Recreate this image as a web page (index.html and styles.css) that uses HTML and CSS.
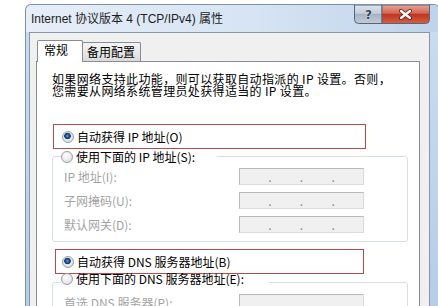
FILE: index.html
```html
<!DOCTYPE html>
<html lang="zh-CN">
<head>
<meta charset="UTF-8">
<title>Internet 协议版本 4 (TCP/IPv4) 属性</title>
<link rel="stylesheet" href="styles.css">
</head>
<body>
<div class="window">
    <div class="titlebar">
        <span class="title">Internet 协议版本 4 (TCP/IPv4) 属性</span>
        <svg class="caption-btns" width="76" height="19" viewBox="0 0 76 19">
            <defs>
                <linearGradient id="gHelp" x1="0" y1="0" x2="0" y2="1">
                    <stop offset="0" stop-color="#dde5ee"/>
                    <stop offset="0.45" stop-color="#c3cdd8"/>
                    <stop offset="0.5" stop-color="#a6b3c2"/>
                    <stop offset="1" stop-color="#c2ccd8"/>
                </linearGradient>
                <linearGradient id="gClose" x1="0" y1="0" x2="0" y2="1">
                    <stop offset="0" stop-color="#e8a494"/>
                    <stop offset="0.45" stop-color="#d46652"/>
                    <stop offset="0.5" stop-color="#be3623"/>
                    <stop offset="1" stop-color="#d65f42"/>
                </linearGradient>
            </defs>
            <path d="M0.5 0 V14.5 Q0.5 18.5 4.5 18.5 H28 V0 Z" fill="url(#gHelp)" stroke="#56657a"/>
            <path d="M28 0 V18.5 H71.5 Q75.5 18.5 75.5 14.5 V0 Z" fill="url(#gClose)" stroke="#56657a"/>
            <text x="14.5" y="14" text-anchor="middle" font-family="DejaVu Sans" font-weight="bold" font-size="12" fill="#34465a" stroke="#eef2f6" stroke-width="0.6" paint-order="stroke">?</text>
            <path d="M47 6 L56 13 M56 6 L47 13" stroke="#5a1a10" stroke-width="4" stroke-linecap="round"/>
            <path d="M47 6 L56 13 M56 6 L47 13" stroke="#fff" stroke-width="2.4" stroke-linecap="round"/>
        </svg>
    </div>
    <div class="client">
        <div class="tabs">
            <span class="tab active">常规</span>
            <span class="tab">备用配置</span>
        </div>
        <div class="panel">
            <p class="intro">如果网络支持此功能，则可以获取自动指派的 IP 设置。否则，<br>您需要从网络系统管理员处获得适当的 IP 设置。</p>

            <div class="mark">
                <label class="opt"><span class="radio on"></span>自动获得 IP 地址(O)</label>
            </div>
            <fieldset class="group">
                <legend><label class="opt"><span class="radio"></span>使用下面的 IP 地址(S):</label></legend>
                <div class="row first"><span class="lbl">IP 地址(I):</span><span class="ipbox"><i>.</i><i>.</i><i>.</i></span></div>
                <div class="row"><span class="lbl">子网掩码(U):</span><span class="ipbox"><i>.</i><i>.</i><i>.</i></span></div>
                <div class="row"><span class="lbl">默认网关(D):</span><span class="ipbox"><i>.</i><i>.</i><i>.</i></span></div>
            </fieldset>

            <div class="mark mark-dns">
                <label class="opt"><span class="radio on"></span>自动获得 DNS 服务器地址(B)</label>
            </div>
            <fieldset class="group group-dns">
                <legend><label class="opt"><span class="radio"></span>使用下面的 DNS 服务器地址(E):</label></legend>
                <div class="row first"><span class="lbl">首选 DNS 服务器(P):</span><span class="ipbox"><i>.</i><i>.</i><i>.</i></span></div>
            </fieldset>
        </div>
    </div>
</div>
</body>
</html>
```

FILE: styles.css
```css
body {
    margin: 0;
    height: 306px;
    overflow: hidden;
    background: #fff;
    font-family: "Noto Sans CJK SC", sans-serif;
    font-size: 12px;
    color: #000;
}
.window {
    margin: 4px 0 0 25px;
    width: 401px;
    height: 301px;
    overflow: hidden;
    padding: 0 9px 0 3px;
    border: 1px solid #7d90a8;
    border-bottom: none;
    border-radius: 6px 6px 0 0;
    background: linear-gradient(180deg, #dfe9f5 0, #c9dbee 30px, #b7cde6 100%);
}
.titlebar {
    height: 27px;
    display: flex;
    justify-content: space-between;
    align-items: flex-start;
    background: linear-gradient(90deg, #e6eef8 0, #d6e4f3 55%, #bed3ea 100%);
    margin: 0 -9px 0 -3px;
    padding: 0 9px 0 3px;
    border-radius: 6px 6px 0 0;
}
.title {
    margin: 6px 0 0 2px;
    line-height: 16px;
    font-family: "Liberation Sans", "Noto Sans CJK SC", sans-serif;
    font-size: 12px;
    color: #1e1e1e;
}
.caption-btns {
    display: block;
    flex-shrink: 0;
}
.client {
    height: 280px;
    background: #f0f0f0;
    border: 1px solid #8797aa;
    border-bottom: none;
}
.tabs {
    display: flex;
    align-items: flex-end;
    padding: 7px 0 0 7px;
}
.tab {
    height: 17px;
    line-height: 16px;
    padding: 1px 5px 0 4px;
    border: 1px solid #898c95;
    border-bottom: none;
    background: linear-gradient(180deg, #f4f4f4 0, #e9e9e9 50%, #dadada 100%);
    border-radius: 2px 2px 0 0;
}
.tab.active {
    position: relative;
    z-index: 1;
    width: 38px;
    height: 20px;
    padding: 1px 0 0 6px;
    margin-bottom: -1px;
    margin-right: -1px;
    background: #fff;
}
.panel {
    margin: 0 9px 0 6px;
    height: 240px;
    overflow: hidden;
    padding: 11px 0 0 15px;
    background: #fff;
    border: 1px solid #898c95;
    border-bottom: none;
}
.intro {
    margin: 0;
    line-height: 12px;
    letter-spacing: 0.35px;
}
.mark {
    margin: 27px 0 0 1px;
    width: 313px;
    height: 25px;
    box-sizing: border-box;
    padding-left: 8px;
    display: flex;
    align-items: center;
    border: 1px solid #b5494b;
}
.mark-dns {
    margin: 7px 0 0 3px;
    width: 309px;
    padding-left: 6px;
}
.opt {
    display: flex;
    align-items: center;
    gap: 3px;
    line-height: 13px;
}
.radio {
    width: 10px;
    height: 10px;
    border: 1px solid #9a9ea3;
    border-radius: 50%;
    background: radial-gradient(circle at 40% 35%, #fff 0, #e8e8e8 60%, #cfd2d6 100%);
}
.radio.on {
    background: radial-gradient(circle at 45% 40%, #6f9bd6 0, #1d4a8a 2px, #18386a 3px, #e9edf2 3.6px, #d0d5db 100%);
}
.group {
    margin: 1px 11px 0 0;
    padding: 0 0 8px 11px;
    border: 1px solid #d5dfe5;
    border-radius: 3px;
}
.group legend {
    padding: 0 22px 0 0;
    margin-left: -3px;
}
.group-dns {
    margin-top: -2px;
}
.group-dns legend {
    padding-bottom: 7px;
    padding-right: 25px;
}
.row {
    display: flex;
    align-items: center;
    height: 17px;
    margin-top: 7px;
    color: #a3a3a3;
}
.row.first {
    margin-top: 5px;
}
.group-dns .row.first {
    margin-top: 2px;
}
.lbl {
    width: 175px;
}
.ipbox {
    width: 125px;
    height: 17px;
    box-sizing: border-box;
    display: flex;
    justify-content: space-evenly;
    align-items: flex-end;
    background: #f0f0f0;
    border: 1px solid #b9b9b9;
    border-right-color: #dcdcdc;
    border-bottom-color: #dcdcdc;
}
.ipbox i {
    font-style: normal;
    line-height: 14px;
    color: #8a8a8a;
}
```
